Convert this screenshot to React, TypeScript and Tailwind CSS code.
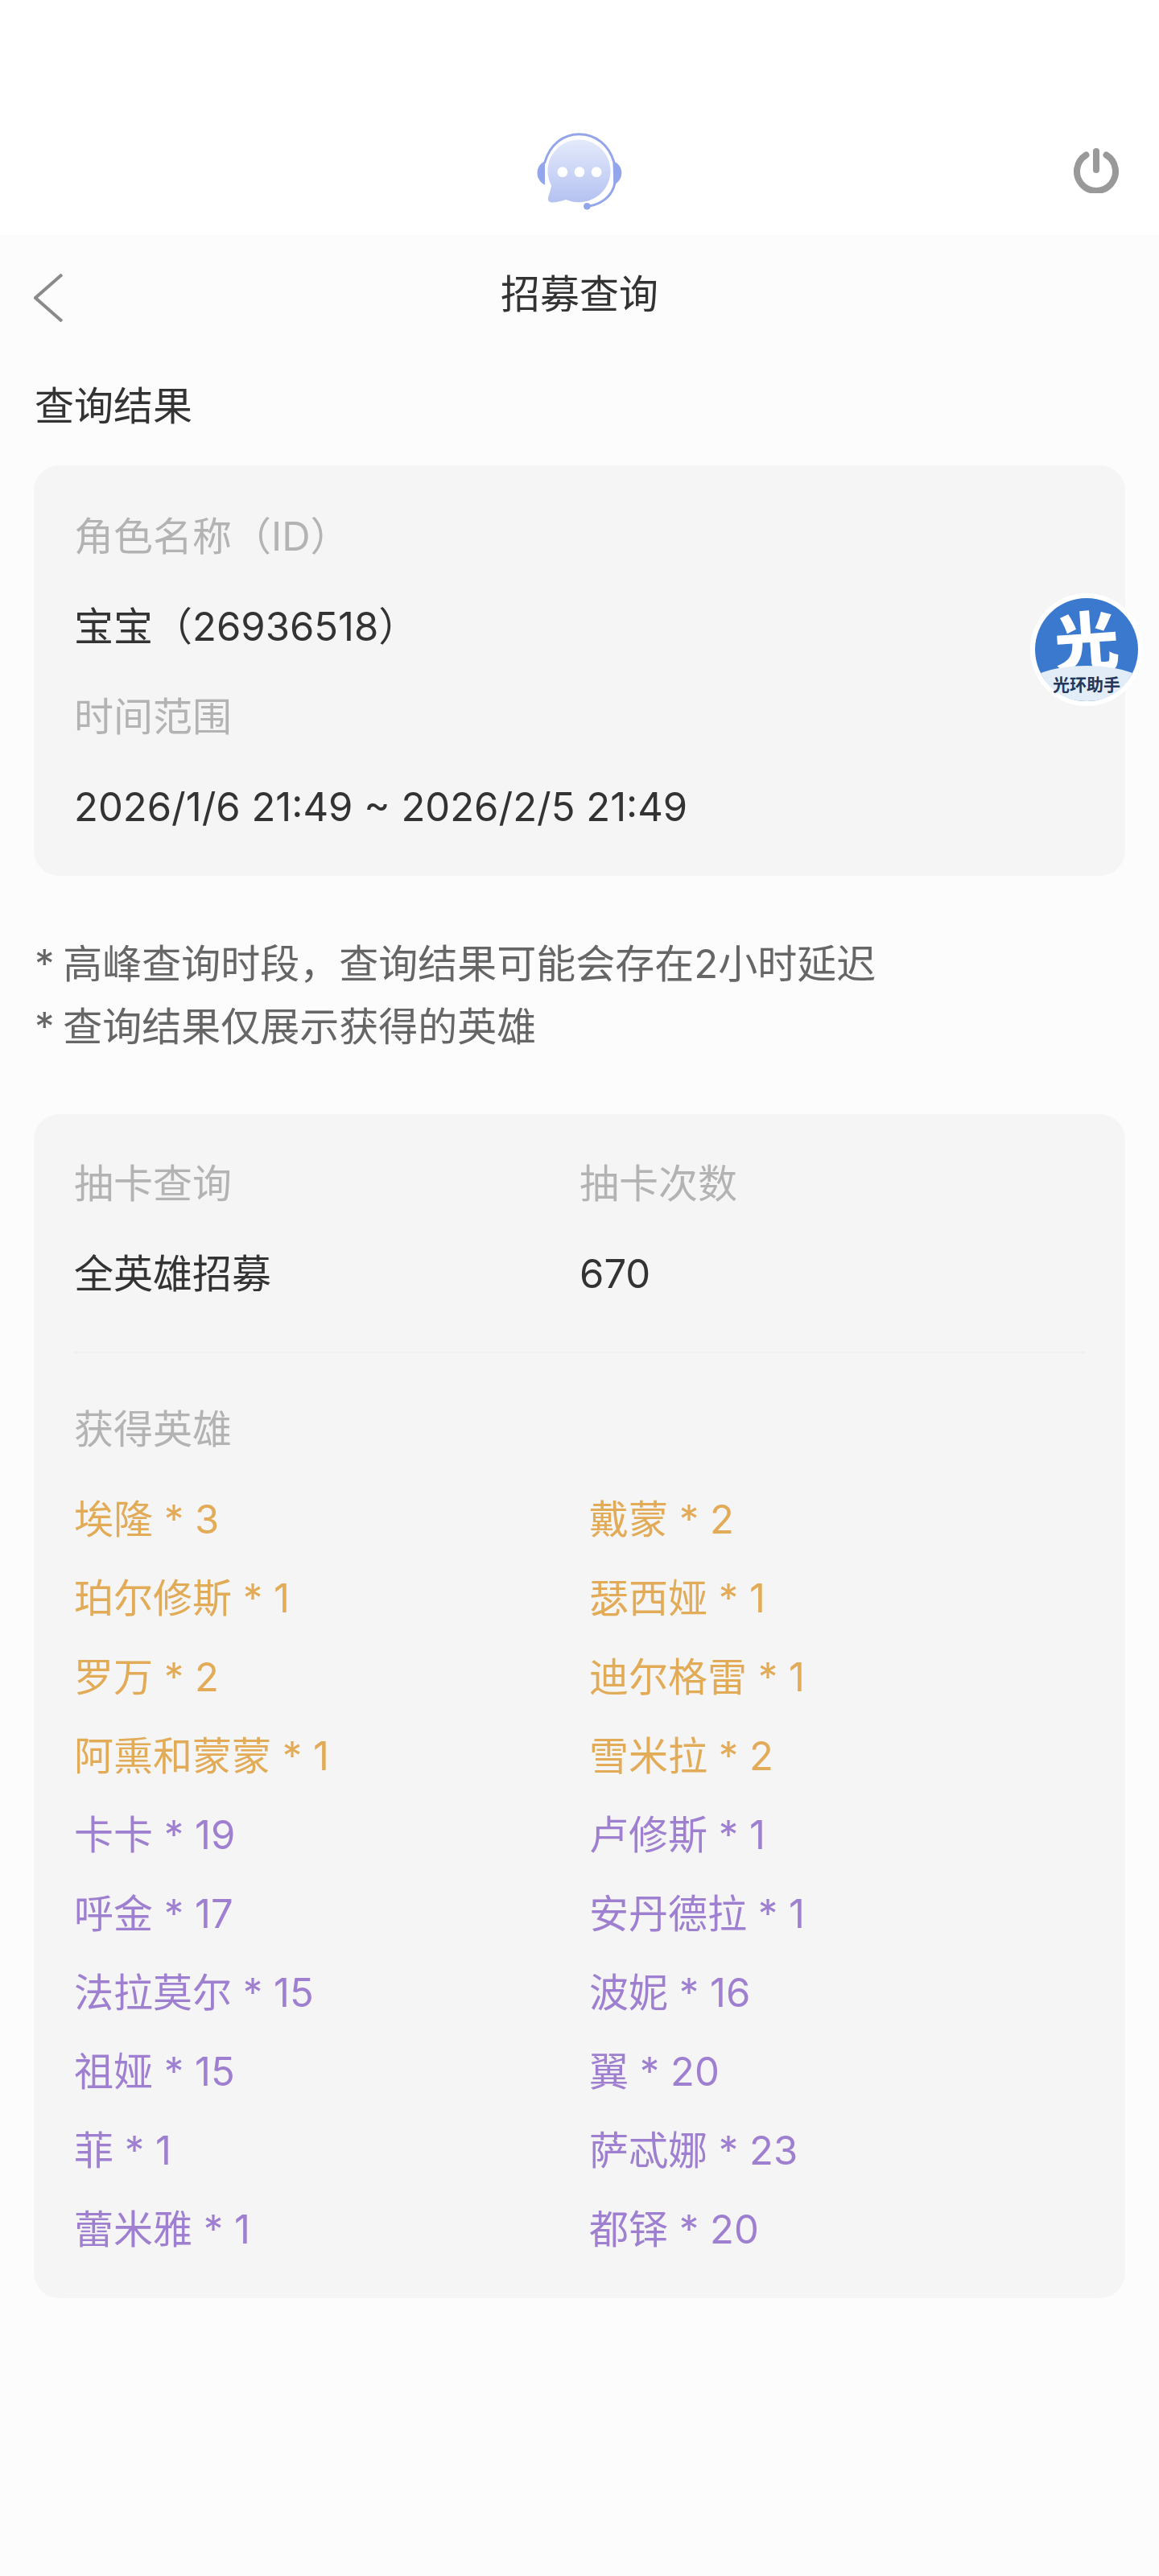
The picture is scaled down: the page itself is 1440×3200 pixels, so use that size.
const FONT = "font-['Inter','Noto_Sans_CJK_SC',sans-serif]";

const GOLD = "text-[#e2ab57]";
const PURPLE = "text-[#9f7fd0]";

const heroes: { left: string; right: string; color: string }[] = [
  { left: "埃隆 * 3", right: "戴蒙 * 2", color: GOLD },
  { left: "珀尔修斯 * 1", right: "瑟西娅 * 1", color: GOLD },
  { left: "罗万 * 2", right: "迪尔格雷 * 1", color: GOLD },
  { left: "阿熏和蒙蒙 * 1", right: "雪米拉 * 2", color: GOLD },
  { left: "卡卡 * 19", right: "卢修斯 * 1", color: PURPLE },
  { left: "呼金 * 17", right: "安丹德拉 * 1", color: PURPLE },
  { left: "法拉莫尔 * 15", right: "波妮 * 16", color: PURPLE },
  { left: "祖娅 * 15", right: "翼 * 20", color: PURPLE },
  { left: "菲 * 1", right: "萨忒娜 * 23", color: PURPLE },
  { left: "蕾米雅 * 1", right: "都铎 * 20", color: PURPLE },
];

function HeadsetLogo() {
  return (
    <svg width="114" height="104" viewBox="190 60 340 310" fill="none">
      <defs>
        <linearGradient id="bubble" x1="0" y1="0" x2="0" y2="1">
          <stop offset="0" stopColor="#e4eafb" />
          <stop offset="1" stopColor="#b4c2f1" />
        </linearGradient>
      </defs>
      <path d="M232 268C194 250 194 196 232 180Z" fill="#93a6ec" />
      <path d="M486 180C526 196 526 250 486 268Z" fill="#93a6ec" />
      <path
        d="M231 185C250 118 300 80 358 80C420 80 470 120 488 185L491 262C480 312 440 340 392 347"
        stroke="#93a6ec"
        strokeWidth="9"
        strokeLinecap="round"
      />
      <circle cx="388" cy="347" r="13" fill="#93a6ec" />
      <path
        d="M358 100C423 100 475 152 475 216C475 280 423 332 358 332C340 332 325 328 310 322C290 328 270 332 258 333C244 333 241 322 245 310C250 295 254 280 256 270C247 254 242 236 242 216C242 152 294 100 358 100Z"
        fill="url(#bubble)"
      />
      <circle cx="297" cy="220" r="19" fill="#fff" />
      <circle cx="360" cy="220" r="19" fill="#fff" />
      <circle cx="423" cy="220" r="19" fill="#fff" />
    </svg>
  );
}

function PowerIcon() {
  return (
    <svg width="56" height="56" viewBox="0 0 56 56" fill="none" stroke="#999999" strokeWidth="8" strokeLinecap="round">
      <path d="M15.5 8.5A24 24 0 1 0 40.5 8.5" />
      <path d="M28 4V27" />
    </svg>
  );
}

function BackIcon() {
  return (
    <svg width="36" height="60" viewBox="0 0 36 60" fill="none" stroke="#8a8a8a" strokeWidth="4">
      <path d="M35 1L2 30L35 59" />
    </svg>
  );
}

function HaloBadge() {
  return (
    <svg width="140" height="140" viewBox="0 0 140 140">
      <circle cx="70" cy="70" r="70" fill="#fff" />
      <circle cx="70" cy="70" r="64" fill="#3a79cd" />
      <text
        x="70"
        y="90"
        textAnchor="middle"
        fontSize="80"
        fontWeight="900"
        fill="#fff"
        fontFamily="Noto Sans CJK SC, sans-serif"
        transform="rotate(-4 70 58)"
      >
        光
      </text>
      <path d="M13 99C45 87 95 87 127 99C116 122 95 134 70 134C45 134 24 122 13 99Z" fill="#e3edf8" />
      <text x="70" y="121" textAnchor="middle" fontSize="21" fontWeight="700" fill="#253858" fontFamily="Noto Sans CJK SC, sans-serif">
        光环助手
      </text>
    </svg>
  );
}

export default function App() {
  return (
    <div className={`${FONT} min-h-[3200px] bg-[#fcfcfc] text-[49px] leading-[64px] text-[#333333]`}>
      <header className="grid h-[292px] grid-cols-[1fr_auto_1fr] items-center bg-white pt-[132px]">
        <div />
        <HeadsetLogo />
        <div className="flex justify-end pr-[50px]">
          <PowerIcon />
        </div>
      </header>

      <div className="px-[42px]">
        <div className="mt-[40px] grid h-[64px] grid-cols-[1fr_auto_1fr] items-center">
          <div className="mt-[8px]">
            <BackIcon />
          </div>
          <h1>招募查询</h1>
          <div />
        </div>

        <h2 className="mt-[77px] pl-[1px]">查询结果</h2>

        <section className="relative mt-[41px] flex flex-col gap-[48px] rounded-[32px] bg-[#f5f5f5] pt-[57px] pr-[50px] pb-[53px] pl-[50px]">
          <p className="text-[#b3b3b3]">角色名称（ID）</p>
          <p>宝宝（26936518）</p>
          <p className="text-[#b3b3b3]">时间范围</p>
          <p>2026/1/6 21:49 ~ 2026/2/5 21:49</p>
          <div className="absolute top-[159px] right-[-22px]">
            <HaloBadge />
          </div>
        </section>

        <div className="mt-[78px] mb-[-1px] flex flex-col gap-[14px] pl-[1px] text-[#666666]">
          <p>
            <span className="mr-[-3px]">*</span> 高峰查询时段，查询结果可能会存在2小时延迟
          </p>
          <p>
            <span className="mr-[-3px]">*</span> 查询结果仅展示获得的英雄
          </p>
        </div>

        <section className="mt-[77px] rounded-[32px] bg-[#f5f5f5] pt-[55px] pr-[50px] pb-[54px] pl-[50px]">
          <div className="grid grid-cols-[628px_1fr] gap-y-[48px]">
            <p className="text-[#b3b3b3]">抽卡查询</p>
            <p className="text-[#b3b3b3]">抽卡次数</p>
            <p>全英雄招募</p>
            <p>670</p>
          </div>
          <div className="mt-[64px] h-[2px] bg-[#efefef]" />
          <p className="mt-[63px] text-[#b3b3b3]">获得英雄</p>
          <div className="mt-[48px] mb-[-1px] grid grid-cols-[640px_1fr] gap-y-[34px]">
            {heroes.map((h) => [
              <p key={h.left} className={h.color}>
                {h.left}
              </p>,
              <p key={h.right} className={h.color}>
                {h.right}
              </p>,
            ])}
          </div>
        </section>
      </div>
    </div>
  );
}
